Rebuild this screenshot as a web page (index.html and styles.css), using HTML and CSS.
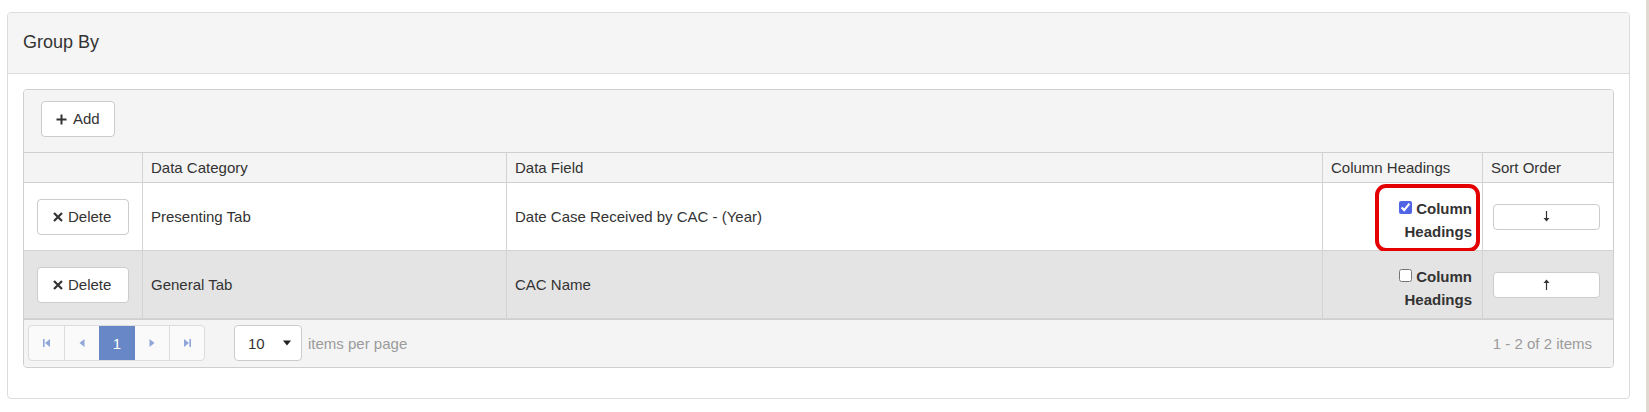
FILE: index.html
```html
<!DOCTYPE html>
<html lang="en">
<head>
<meta charset="utf-8">
<title>Group By</title>
<link rel="stylesheet" href="styles.css">
</head>
<body>
<div class="page">
  <main class="main">
    <section class="panel">
      <div class="panel-heading">Group By</div>
      <div class="panel-body">
        <div class="grid">
          <div class="toolbar">
            <button class="btn btn-add" type="button">
              <svg class="ico-plus" width="11" height="11" viewBox="0 0 11 11"><path d="M5.5 0.5v10M0.5 5.5h10" stroke="#333" stroke-width="2" fill="none"/></svg>
              <span>Add</span>
            </button>
          </div>
          <table class="grid-table">
            <colgroup>
              <col class="c-del">
              <col class="c-cat">
              <col class="c-field">
              <col class="c-head">
              <col class="c-sort">
            </colgroup>
            <thead>
              <tr>
                <th></th>
                <th>Data Category</th>
                <th>Data Field</th>
                <th>Column Headings</th>
                <th>Sort Order</th>
              </tr>
            </thead>
            <tbody>
              <tr>
                <td class="cell-del">
                  <button class="btn btn-del" type="button">
                    <svg width="10" height="10" viewBox="0 0 10 10"><path d="M1 1L9 9M9 1L1 9" stroke="#333" stroke-width="2.2" fill="none"/></svg>
                    <span>Delete</span>
                  </button>
                </td>
                <td>Presenting Tab</td>
                <td>Date Case Received by CAC - (Year)</td>
                <td class="cell-chk">
                  <label class="chk-label"><input type="checkbox" checked> Column Headings</label>
                  <span class="highlight"></span>
                </td>
                <td class="cell-sort">
                  <button class="btn-sort" type="button" aria-label="Descending">
                    <svg width="7" height="11" viewBox="0 0 7 11"><path d="M3.5 0v8" stroke="#333" stroke-width="1.2"/><path d="M0.5 7L6.5 7L3.5 10.5Z" fill="#333"/></svg>
                  </button>
                </td>
              </tr>
              <tr class="alt">
                <td class="cell-del">
                  <button class="btn btn-del" type="button">
                    <svg width="10" height="10" viewBox="0 0 10 10"><path d="M1 1L9 9M9 1L1 9" stroke="#333" stroke-width="2.2" fill="none"/></svg>
                    <span>Delete</span>
                  </button>
                </td>
                <td>General Tab</td>
                <td>CAC Name</td>
                <td class="cell-chk">
                  <label class="chk-label"><input type="checkbox"> Column Headings</label>
                </td>
                <td class="cell-sort">
                  <button class="btn-sort" type="button" aria-label="Ascending">
                    <svg width="7" height="11" viewBox="0 0 7 11"><path d="M3.5 3v8" stroke="#333" stroke-width="1.2"/><path d="M0.5 4L6.5 4L3.5 0.5Z" fill="#333"/></svg>
                  </button>
                </td>
              </tr>
            </tbody>
          </table>
          <div class="pager">
            <div class="pager-nav">
              <span class="pg-btn"><svg width="8" height="8" viewBox="0 0 8 8"><rect x="0" y="0" width="1.6" height="8" fill="#8fa6d9"/><path d="M2 4L7 0V8Z" fill="#8fa6d9"/></svg></span>
              <span class="pg-btn"><svg width="6" height="8" viewBox="0 0 6 8"><path d="M0.5 4L5.5 0V8Z" fill="#8fa6d9"/></svg></span>
              <span class="pg-btn pg-current">1</span>
              <span class="pg-btn"><svg width="6" height="8" viewBox="0 0 6 8"><path d="M5.5 4L0.5 0V8Z" fill="#8fa6d9"/></svg></span>
              <span class="pg-btn"><svg width="8" height="8" viewBox="0 0 8 8"><path d="M6 4L1 0V8Z" fill="#8fa6d9"/><rect x="6.4" y="0" width="1.6" height="8" fill="#8fa6d9"/></svg></span>
            </div>
            <div class="pager-size">
              <span>10</span>
              <svg width="8" height="6" viewBox="0 0 8 6"><path d="M0 0.5H8L4 5.5Z" fill="#222"/></svg>
            </div>
            <span class="pager-label">items per page</span>
            <span class="pager-info">1 - 2 of 2 items</span>
          </div>
        </div>
      </div>
    </section>
  </main>
  <div class="edge"></div>
</div>
</body>
</html>
```

FILE: styles.css
```css
html, body {
  margin: 0;
  padding: 0;
  background: #fff;
}

body {
  font-family: "Liberation Sans", Arial, sans-serif;
  font-size: 15px;
  color: #333;
}

.page {
  display: flex;
  height: 100vh;
}

.main {
  flex: 1;
  padding: 12px 16px 0 7px;
}

.edge {
  width: 3px;
  background: #dedad1;
}

.panel {
  border: 1px solid #dcdcdc;
  border-radius: 4px;
}

.panel-heading {
  background: #f5f5f5;
  border-bottom: 1px solid #dcdcdc;
  border-radius: 3px 3px 0 0;
  padding: 19px 15px 21px;
  font-size: 18px;
  line-height: 20px;
}

.panel-body {
  padding: 15px 15px 30px;
}

.grid {
  border: 1px solid #cfcfcf;
  border-radius: 4px;
  overflow: hidden;
}

.toolbar {
  background: #f4f4f4;
  border-bottom: 1px solid #cfcfcf;
  padding: 11px 17px 15px;
  height: 36px;
}

.btn {
  display: inline-flex;
  align-items: center;
  box-sizing: border-box;
  height: 36px;
  padding: 0 14px;
  border: 1px solid #ccc;
  border-radius: 4px;
  background: #fff;
  color: #333;
  font: inherit;
  line-height: 20px;
}

.btn-add {
  gap: 6px;
}

.btn-del {
  width: 92px;
  padding: 0 15px;
  gap: 5px;
}

.grid-table {
  width: 100%;
  border-collapse: separate;
  border-spacing: 0;
  table-layout: fixed;
}

.c-del { width: 118px; }
.c-cat { width: 364px; }
.c-field { width: 816px; }
.c-head { width: 160px; }
.c-sort { width: 131px; }

.grid-table th {
  background: #f4f4f4;
  font-weight: normal;
  text-align: left;
  padding: 6px 8px;
  line-height: 17px;
  border-bottom: 1px solid #cfcfcf;
}

.grid-table th + th,
.grid-table td + td {
  border-left: 1px solid #d3d3d3;
}

.grid-table td {
  box-sizing: border-box;
  height: 68px;
  padding: 0 8px;
  border-bottom: 1px solid #d3d3d3;
  vertical-align: middle;
  background: #fff;
}

.grid-table tr.alt td {
  background: #e4e4e4;
}

.grid-table td.cell-del {
  padding: 0 13px;
}

.grid-table td.cell-chk {
  position: relative;
  text-align: right;
  padding: 0 10px 0 8px;
}

.chk-label {
  display: inline-block;
  font-weight: bold;
  line-height: 23px;
  margin-top: 6px;
  text-align: right;
}

.chk-label input {
  margin: 0;
  width: 13px;
  height: 13px;
  vertical-align: baseline;
  accent-color: #5164e4;
}

.highlight {
  position: absolute;
  top: 1px;
  right: 2px;
  width: 105px;
  height: 68px;
  box-sizing: border-box;
  border: 4px solid #e40000;
  border-radius: 11px;
}

.grid-table td.cell-sort {
  padding: 0 10px;
}

.btn-sort {
  display: flex;
  align-items: center;
  justify-content: center;
  width: 107px;
  height: 26px;
  box-sizing: border-box;
  padding: 0;
  border: 1px solid #ccc;
  border-radius: 4px;
  background: #fff;
}

.pager {
  display: flex;
  align-items: center;
  background: #f4f4f4;
  border-top: 1px solid #cfcfcf;
  padding: 5px 4px 6px;
}

.pager-nav {
  display: flex;
  border: 1px solid #dcdcdc;
  border-radius: 4px;
  overflow: hidden;
  background: #fafafa;
}

.pg-btn {
  display: flex;
  align-items: center;
  justify-content: center;
  box-sizing: border-box;
  width: 35px;
  height: 34px;
}

.pg-btn + .pg-btn {
  border-left: 1px solid #dcdcdc;
}

.pg-current {
  background: #6787c7;
  color: #fff;
  border-left-color: #6787c7 !important;
}

.pg-current + .pg-btn {
  border-left-color: #6787c7;
}

.pager-size {
  display: flex;
  align-items: center;
  gap: 18px;
  box-sizing: border-box;
  width: 68px;
  height: 36px;
  margin-left: 29px;
  padding-left: 13px;
  border: 1px solid #ccc;
  border-radius: 4px;
  background: #fff;
}

.pager-label {
  margin-left: 6px;
  color: #9b9b9b;
}

.pager-info {
  margin-left: auto;
  margin-right: 17px;
  color: #9b9b9b;
}
```
